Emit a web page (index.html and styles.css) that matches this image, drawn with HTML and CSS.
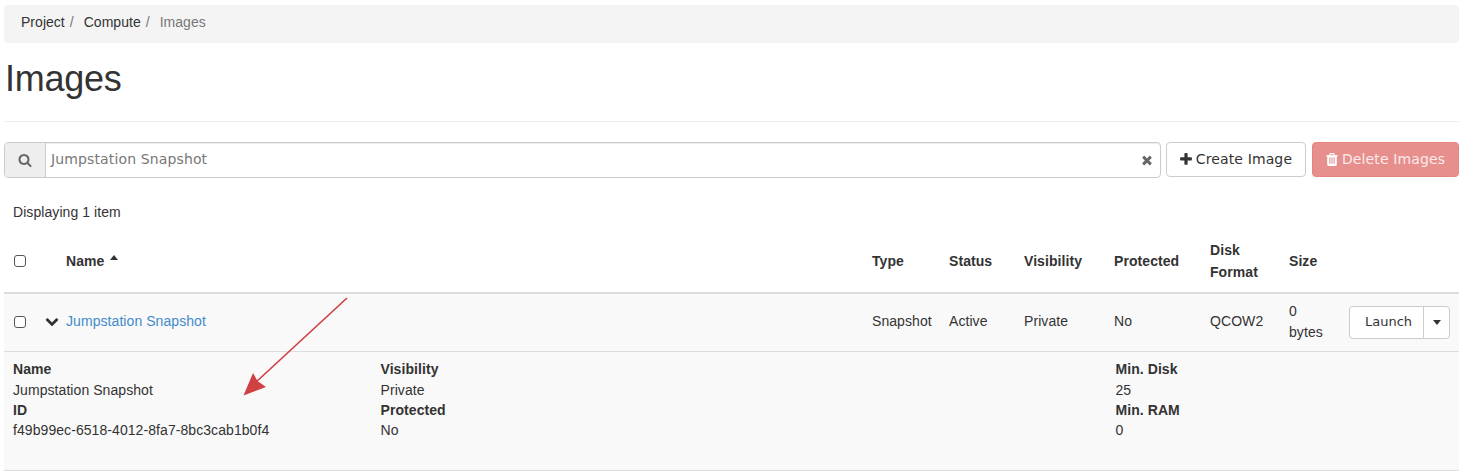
FILE: index.html
```html
<!DOCTYPE html>
<html lang="en">
<head>
<meta charset="utf-8">
<title>Images</title>
<link rel="stylesheet" href="styles.css">
</head>
<body>
<main class="page">
  <nav class="breadcrumb"><a>Project</a><i>/</i><a>Compute</a><i>/</i><span>Images</span></nav>
  <h1 class="title">Images</h1>
  <div class="toolbar">
    <div class="search">
      <span class="addon"><svg class="icon" viewBox="0 0 1792 1792"><path d="M1216 832q0-185-131.5-316.5t-316.5-131.5-316.5 131.5-131.5 316.5 131.5 316.5 316.5 131.5 316.5-131.5 131.5-316.5zm512 832q0 52-38 90t-90 38q-54 0-90-38l-343-342q-179 124-399 124-143 0-273.5-55.5t-225-150-150-225-55.5-273.5 55.5-273.5 150-225 225-150 273.5-55.5 273.5 55.5 225 150 150 225 55.5 273.5q0 220-124 399l343 343q37 37 37 90z"/></svg></span>
      <span class="query">Jumpstation Snapshot</span>
      <svg class="icon clear" viewBox="0 0 1792 1792"><path d="M1490 1322q0 40-28 68l-136 136q-28 28-68 28t-68-28l-294-294-294 294q-28 28-68 28t-68-28l-136-136q-28-28-28-68t28-68l294-294-294-294q-28-28-28-68t28-68l136-136q28-28 68-28t68 28l294 294 294-294q28-28 68-28t68 28l136 136q28 28 28 68t-28 68l-294 294 294 294q28 28 28 68z"/></svg>
    </div>
    <button class="btn create"><svg class="icon" viewBox="192 0 1408 1792"><path d="M1600 736v192q0 40-28 68t-68 28h-416v416q0 40-28 68t-68 28h-192q-40 0-68-28t-28-68v-416h-416q-40 0-68-28t-28-68v-192q0-40 28-68t68-28h416v-416q0-40 28-68t68-28h192q40 0 68 28t28 68v416h416q40 0 68 28t28 68z"/></svg><span>Create Image</span></button>
    <button class="btn delete"><svg class="icon" viewBox="192 0 1408 1792"><path d="M704 1376v-704q0-14-9-23t-23-9h-64q-14 0-23 9t-9 23v704q0 14 9 23t23 9h64q14 0 23-9t9-23zm256 0v-704q0-14-9-23t-23-9h-64q-14 0-23 9t-9 23v704q0 14 9 23t23 9h64q14 0 23-9t9-23zm256 0v-704q0-14-9-23t-23-9h-64q-14 0-23 9t-9 23v704q0 14 9 23t23 9h64q14 0 23-9t9-23zm-544-992h448l-48-117q-7-9-17-11h-317q-10 2-17 11zm928 32v64q0 14-9 23t-23 9h-96v948q0 83-47 143.5t-113 60.5h-832q-66 0-113-58.5t-47-141.5v-952h-96q-14 0-23-9t-9-23v-64q0-14 9-23t23-9h309l70-167q15-37 54-63t79-26h320q40 0 79 26t54 63l70 167h309q14 0 23 9t9 23z"/></svg><span>Delete Images</span></button>
  </div>
  <p class="count">Displaying 1 item</p>
  <section class="table">
    <div class="row head">
      <span class="check"></span><span></span>
      <span class="sort">Name <i class="caret up"></i></span>
      <span>Type</span><span>Status</span><span>Visibility</span><span>Protected</span><span>Disk<br>Format</span><span>Size</span><span></span>
    </div>
    <div class="row item">
      <span class="check"></span>
      <svg class="icon chevron" viewBox="0 0 1792 1792"><path d="M1683 808l-742 741q-19 19-45 19t-45-19l-742-741q-19-19-19-45.5t19-45.5l166-165q19-19 45-19t45 19l531 531 531-531q19-19 45-19t45 19l166 165q19 19 19 45.5t-19 45.5z"/></svg>
      <a class="link">Jumpstation Snapshot</a>
      <span>Snapshot</span><span>Active</span><span>Private</span><span>No</span><span>QCOW2</span><span class="size">0<br>bytes</span>
      <div class="split"><button class="launch">Launch</button><button class="toggle"><i class="caret down"></i></button></div>
    </div>
    <div class="details">
      <dl><dt>Name</dt><dd>Jumpstation Snapshot</dd><dt>ID</dt><dd>f49b99ec-6518-4012-8fa7-8bc3cab1b0f4</dd></dl>
      <dl><dt>Visibility</dt><dd>Private</dd><dt>Protected</dt><dd>No</dd></dl>
      <dl><dt>Min. Disk</dt><dd>25</dd><dt>Min. RAM</dt><dd>0</dd></dl>
    </div>
  </section>
  <svg class="arrow" viewBox="0 0 106 100"><path class="shaft" d="M104 1L12 86"/><path class="tip" d="M0.5 98.500L10 76L14.500 84L23 90Z"/></svg>
</main>
</body>
</html>
```
FILE: styles.css
```css
* { box-sizing: border-box; }
body { margin: 0; background: #fff; color: #333; font: 14px/20px "Liberation Sans", Arial, sans-serif; letter-spacing: .07px; }
.page { position: relative; width: 1455px; margin-left: 4px; padding-top: 5px; }
.breadcrumb { display: flex; height: 38px; padding: 7px 17px; background: #f4f4f4; border-radius: 4px; letter-spacing: .03px; }
.breadcrumb i { font-style: normal; color: #777; margin: 0 10px 0 5px; }
.breadcrumb span { color: #777; }
.title { margin: 0; height: 79px; padding: 16px 0 0 1px; border-bottom: 1px solid #eee; font-size: 36px; font-weight: 400; line-height: 40px; letter-spacing: -.25px; }
.icon { display: block; width: 14px; height: 14px; fill: currentColor; }
.toolbar { display: flex; align-items: flex-start; margin-top: 20px; font-family: "DejaVu Sans", sans-serif; }
.search { display: flex; align-items: center; width: 1157px; height: 36px; margin-right: 5px; border: 1px solid #ccc; border-radius: 4px; box-shadow: inset 0 1px 1px rgba(0,0,0,.075); color: #777; }
.addon { display: flex; align-items: center; justify-content: center; align-self: stretch; width: 41px; background: #eee; border-right: 1px solid #ccc; border-radius: 3px 0 0 3px; color: #666; }
.query { flex: 1; padding-left: 5px; line-height: 20px; margin-top: -2px; letter-spacing: .13px; }
.clear { margin-right: 6px; color: #666; }
.btn { display: flex; align-items: center; justify-content: center; gap: 4px; height: 35px; padding: 0 0 1px; border: 1px solid #ccc; border-radius: 4px; background: #fff; color: #333; font: 14px/20px "DejaVu Sans", sans-serif; letter-spacing: .12px; }
.btn .icon { width: 12px; height: 15px; }
.create { width: 140px; margin-right: 6px; }
.delete { width: 147px; background: #e78f8d; border-color: #e58481; color: #fbeaea; }
.delete .icon { fill: #fff; }
.count { margin: 24px 0 8px 9px; line-height: 20px; }
.row { display: grid; grid-template-columns: 32px 21px 806px 77px 75px 90px 96px 79px 60px 101px; align-items: center; padding-left: 9px; line-height: 21px; }
.head { height: 64px; border-bottom: 2px solid #ddd; font-weight: 700; line-height: 22px; padding-bottom: 1px; }
.item { height: 58px; background: #f9f9f9; border-bottom: 1px solid #ddd; padding-bottom: 2px; }
.check { width: 12px; height: 12px; margin-left: 1px; border: 1px solid #555; border-radius: 3px; background: #fff; }
.item .check { margin-top: 1px; }
.sort { display: flex; align-items: center; gap: 6px; }
.caret { width: 0; height: 0; border: 4px solid transparent; }
.up { border-width: 0 4.5px 5px; border-bottom-color: #333; margin-bottom: 6px; }
.down { border-bottom: 0; border-top-color: #333; }
.toggle .down { border-top-width: 5px; }
.chevron { margin-top: -1px; }
.link { color: #428bca; }
.split { display: flex; height: 33px; margin-top: 1px; }
.split button { display: flex; align-items: center; justify-content: center; padding: 0; border: 1px solid #ccc; background: #fff; color: #333; font: 13px/18px "DejaVu Sans", sans-serif; }
.split .launch { width: 75px; padding-left: 4px; border-radius: 4px 0 0 4px; }
.split .toggle { width: 27px; margin-left: -1px; border-radius: 0 4px 4px 0; }
.details { display: grid; grid-template-columns: 367.500px 735px 1fr; height: 119px; padding: 7px 0 0 9px; background: #f9f9f9; border-bottom: 1px solid #ddd; }
dl { margin: 0; line-height: 20px; }
dt { font-weight: 700; height: 20px; }
dd { margin: 0; height: 20px; }
dt:first-child { height: 21px; }
.arrow { position: absolute; left: 239px; top: 297px; width: 106px; height: 100px; }
.shaft { fill: none; stroke: #cf4142; stroke-width: 1.7; }
.tip { fill: #cf4142; }
```
